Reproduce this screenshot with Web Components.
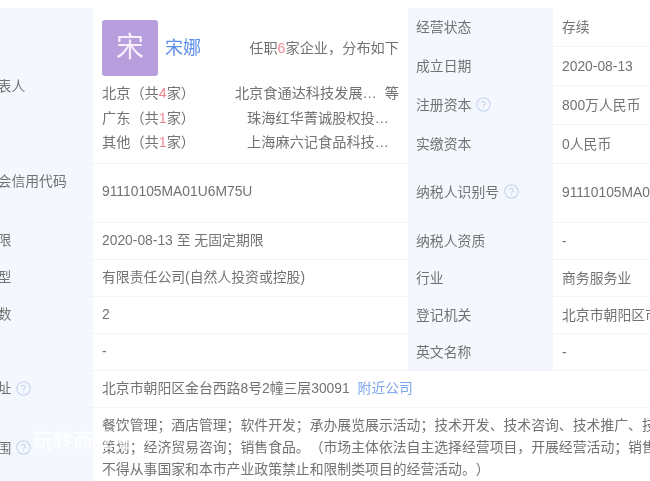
<!DOCTYPE html>
<html lang="zh">
<head>
<meta charset="utf-8">
<title>工商信息</title>
<style>
  html, body { margin: 0; height: 100%; overflow: hidden; background: #fff; }
</style>
</head>
<body>
<info-table>
  <info-row tall>
    <info-label>法定代表人</info-label>
    <legal-person slot="value"></legal-person>
    <side-list slot="side">
      <side-row label="经营状态" h="39">存续</side-row>
      <side-row label="成立日期" h="39">2020-08-13</side-row>
      <side-row label="注册资本" h="39" hint>800万人民币</side-row>
      <side-row label="实缴资本" h="38" last>0人民币</side-row>
    </side-list>
  </info-row>
  <info-row h="59" raised>
    <info-label>统一社会信用代码</info-label>
    <span slot="value">91110105MA01U6M75U</span>
    <side-row slot="side" label="纳税人识别号" h="58" hint last up="3">91110105MA01U6M75U</side-row>
  </info-row>
  <info-row h="37">
    <info-label>营业期限</info-label>
    <span slot="value">2020-08-13 至 无固定期限</span>
    <side-row slot="side" label="纳税人资质" h="36" last>-</side-row>
  </info-row>
  <info-row h="37">
    <info-label>企业类型</info-label>
    <span slot="value">有限责任公司(自然人投资或控股)</span>
    <side-row slot="side" label="行业" h="36" last>商务服务业</side-row>
  </info-row>
  <info-row h="37">
    <info-label>参保人数</info-label>
    <span slot="value">2</span>
    <side-row slot="side" label="登记机关" h="36" last>北京市朝阳区市场监督管理局</side-row>
  </info-row>
  <info-row h="37">
    <info-label>曾用名</info-label>
    <span slot="value">-</span>
    <side-row slot="side" label="英文名称" h="36" last>-</side-row>
  </info-row>
  <info-row h="37" wide>
    <info-label>注册地址 <help-icon></help-icon></info-label>
    <span slot="value">北京市朝阳区金台西路8号2幢三层30091<a-link>附近公司</a-link></span>
  </info-row>
  <info-row h="82" wide>
    <info-label>经营范围 <help-icon></help-icon></info-label>
    <scope-text slot="value">餐饮管理；酒店管理；软件开发；承办展览展示活动；技术开发、技术咨询、技术推广、技术服务；<br>策划；经济贸易咨询；销售食品。（市场主体依法自主选择经营项目，开展经营活动；销售食品以及<br>不得从事国家和本市产业政策禁止和限制类项目的经营活动。）</scope-text>
  </info-row>
  <water-mark>玩转商业圈</water-mark>
</info-table>

<script>
  const FONT = `"Liberation Sans", "Noto Sans CJK SC", sans-serif`;

  // small helper, every element below is just a template in an open shadow root
  function define(name, html) {
    customElements.define(
      name,
      class extends HTMLElement {
        connectedCallback() {
          if (this.shadowRoot) return;
          const template = document.createElement("template");
          template.innerHTML = typeof html === "function" ? html(this) : html;
          this.attachShadow({ mode: "open" }).appendChild(template.content.cloneNode(true));
        }
      }
    );
  }

  define("info-table", /* html */ `
    <style>
      :host {
        display: block;
        position: relative;
        margin: 8px 0 0 -54px;
        width: 1000px;
        font: 13.85px/22px ${FONT};
        text-spacing-trim: space-all;
        color: #727272;
        filter: blur(0.75px);
      }
    </style>
    <slot></slot>`);

  define("info-row", (el) => /* html */ `
    <style>
      :host {
        display: flex;
        border-bottom: 1px solid #f3f4f6;
        box-sizing: border-box;
        ${el.hasAttribute("h") ? `height: ${+el.getAttribute("h")}px;` : ""}
      }
      .label {
        flex: 0 0 147px;
        box-sizing: border-box;
        padding: 0 8px ${el.hasAttribute("raised") ? "24px" : el.hasAttribute("tall") ? "0" : "2px"} 10px;
        background: #f4f7fd;
        display: flex;
        align-items: center;
      }
      .value {
        flex: 0 0 ${el.hasAttribute("wide") ? "auto" : "315px"};
        box-sizing: border-box;
        padding: 0 9px ${el.hasAttribute("raised") ? "4px" : "2px"};
        display: flex;
        align-items: center;
        white-space: nowrap;
      }
      .side { flex: 1; min-width: 0; }
    </style>
    <div class="label"><slot></slot></div>
    <div class="value"><slot name="value"></slot></div>
    <div class="side"><slot name="side"></slot></div>`);

  define("info-label", /* html */ `
    <style>
      :host { display: inline-flex; align-items: center; gap: 5px; white-space: nowrap; }
    </style>
    <slot></slot>`);

  define("help-icon", /* html */ `
    <style>
      :host { display: inline-flex; }
      svg { display: block; }
    </style>
    <svg width="15" height="15" viewBox="0 0 15 15" fill="none" stroke="#c6d6ee">
      <circle cx="7.5" cy="7.5" r="6.7" stroke-width="1.1"/>
      <path d="M5.7 6a1.8 1.8 0 1 1 2.8 1.5c-.7.4-1 .8-1 1.5" stroke-width="1.1"/>
      <path d="M7.5 10.4v1" stroke-width="1.1"/>
    </svg>`);

  define("side-list", /* html */ `
    <style>:host { display: block; }</style>
    <slot></slot>`);

  define("side-row", (el) => /* html */ `
    <style>
      :host {
        display: flex;
        box-sizing: border-box;
        height: ${el.getAttribute("h")}px;
        ${el.hasAttribute("last") ? "" : "border-bottom: 1px solid #f3f4f6;"}
      }
      .k, .v {
        box-sizing: border-box;
        display: flex;
        align-items: center;
        white-space: nowrap;
      }
      .k {
        flex: 0 0 145px;
        padding: 0 8px ${el.getAttribute("up") || 1}px;
        background: #f4f7fd;
        gap: 5px;
      }
      .v { padding: 0 9px ${el.getAttribute("up") || 1}px; }
    </style>
    <div class="k">${el.getAttribute("label")}${el.hasAttribute("hint") ? "<help-icon></help-icon>" : ""}</div>
    <div class="v"><slot></slot></div>`);

  define("legal-person", /* html */ `
    <style>
      :host {
        display: flex;
        flex-direction: column;
        width: 297px;
        padding: 6px 0 0;
        font-size: 14.2px;
      }
      .head { display: flex; align-items: center; margin-bottom: 5px; }
      .avatar {
        flex: none;
        width: 56px;
        height: 56px;
        border-radius: 3px;
        background: #b89edd;
        color: #f6eefb;
        font-size: 28px;
        line-height: 56px;
        text-align: center;
      }
      .name { margin-left: 7px; font-size: 18px; color: #5c8fe8; }
      .count { margin-left: auto; }
      em { font-style: normal; color: #ee8a94; }
      .city { display: flex; justify-content: space-between; height: 24.5px; line-height: 25px; }
      .pad { margin-right: 10px; }
      .first { display: flex; gap: 8px; }
    </style>
    <div class="head">
      <div class="avatar">宋</div>
      <div class="name">宋娜</div>
      <div class="count">任职<em>6</em>家企业，分布如下</div>
    </div>
    <div class="city"><span>北京（共<em>4</em>家）</span><span class="first"><span>北京食通达科技发展…</span><span>等</span></span></div>
    <div class="city"><span>广东（共<em>1</em>家）</span><span class="pad">珠海红华菁诚股权投…</span></div>
    <div class="city"><span>其他（共<em>1</em>家）</span><span class="pad">上海麻六记食品科技…</span></div>`);

  define("a-link", /* html */ `
    <style>:host { color: #7ea6ec; margin-left: 4px; }</style>
    <slot></slot>`);

  define("scope-text", /* html */ `
    <style>:host { display: block; line-height: 22px; white-space: nowrap; margin-top: -1px; }</style>
    <slot></slot>`);

  // washed out mark sitting over the last row
  define("water-mark", /* html */ `
    <style>
      :host {
        position: absolute;
        left: 87px;
        top: 418px;
        font-size: 20px;
        font-weight: 700;
        line-height: 30px;
        color: rgba(255, 255, 255, 0.7);
        white-space: nowrap;
      }
    </style>
    <slot></slot>`);
</script>
</body>
</html>
